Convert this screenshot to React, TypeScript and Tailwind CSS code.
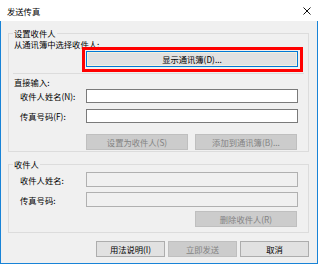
import React from 'react';

const font = "font-['Noto_Sans_CJK_SC','Microsoft_YaHei',sans-serif]";

function WinButton({
  children,
  disabled,
  className = '',
}: {
  children: React.ReactNode;
  disabled?: boolean;
  className?: string;
}) {
  return (
    <button
      type="button"
      disabled={disabled}
      className={`h-[16px] flex items-center justify-center border text-[8.3px] leading-none ${
        disabled
          ? 'bg-[#cccccc] border-[#bfbfbf] text-[#838383]'
          : 'bg-[#e1e1e1] border-[#adadad] text-black'
      } ${className}`}
    >
      {children}
    </button>
  );
}

function Field({ label, disabled, height }: { label: string; disabled?: boolean; height: string }) {
  return (
    <div className={`flex items-center ${height}`}>
      <span className="w-[72px] pl-[6px] leading-[12px]">{label}</span>
      <input
        readOnly
        disabled={disabled}
        className={`w-[212px] h-full border ${
          disabled ? 'bg-[#f0f0f0] border-[#b0b0b0]' : 'bg-white border-[#7a7a7a]'
        }`}
      />
    </div>
  );
}

function GroupBox({
  title,
  className,
  children,
}: {
  title: string;
  className: string;
  children: React.ReactNode;
}) {
  return (
    <div className={`relative w-[301px] border border-[#dcdcdc] pl-[5px] flex flex-col ${className}`}>
      <span className="absolute left-[4px] top-[-7px] px-[1px] bg-[#f0f0f0] leading-[12px]">
        {title}
      </span>
      {children}
    </div>
  );
}

export default function App() {
  return (
    <div className={`w-[318px] h-[264px] flex flex-col text-[8.3px] text-black ${font}`}>
      {/* Title bar */}
      <div className="h-[21px] bg-white flex items-center justify-between pl-[7px] pr-[7px]">
        <span className="text-[8.3px] leading-[12px] pt-[1px]">发送传真</span>
        <svg width="8" height="8" viewBox="0 0 8 8" className="mt-[1px]">
          <path d="M0.5 0.5 L7.5 7.5 M7.5 0.5 L0.5 7.5" stroke="#111" strokeWidth="1" />
        </svg>
      </div>

      {/* Body */}
      <div className="flex-1 bg-[#f0f0f0] border-x border-b border-[#1883d7] pl-[7px] flex flex-col">
        <GroupBox title="设置收件人" className="mt-[12px] h-[119px]">
          <div className="mt-[4px] h-[12px] leading-[12px]">从通讯簿中选择收件人:</div>

          <div className="relative mt-[1px] ml-[72px] w-[212px] h-[16px]">
            <button
              type="button"
              className="w-full h-full flex items-center justify-center border border-[#0078d7] bg-[#e1e1e1] shadow-[inset_0_0_0_1px_#f4f1dc] leading-none"
            >
              显示通讯簿(D)...
            </button>
            {/* annotation frame */}
            <div className="absolute -left-[4px] -top-[4px] -right-[5px] -bottom-[5px] border-[3px] border-[#ff0000] pointer-events-none" />
          </div>

          <div className="mt-[6px] ml-[-1px] w-[291px] h-[1px] bg-[#dcdcdc]" />
          <div className="mt-[2px] h-[12px] leading-[12px]">直接输入:</div>

          <div className="mt-[1px]">
            <Field label="收件人姓名(N):" height="h-[14px]" />
          </div>
          <div className="mt-[6px]">
            <Field label="传真号码(F):" height="h-[14px]" />
          </div>

          <div className="mt-[11px] ml-[72px] flex gap-[7px]">
            <WinButton disabled className="w-[102px]">
              设置为收件人(S)
            </WinButton>
            <WinButton disabled className="w-[102px]">
              添加到通讯簿(B)...
            </WinButton>
          </div>
        </GroupBox>

        <GroupBox title="收件人" className="mt-[12px] h-[69px]">
          <div className="mt-[7px]">
            <Field label="收件人姓名:" disabled height="h-[15px]" />
          </div>
          <div className="mt-[5px]">
            <Field label="传真号码:" disabled height="h-[15px]" />
          </div>
          <div className="mt-[4px] ml-[181px]">
            <WinButton disabled className="w-[102px]">
              删除收件人(R)
            </WinButton>
          </div>
        </GroupBox>

        <div className="mt-[8px] pr-[8px] flex justify-end gap-[3px]">
          <WinButton className="w-[69px]">用法说明(I)</WinButton>
          <WinButton disabled className="w-[69px]">
            立即发送
          </WinButton>
          <WinButton className="w-[69px]">取消</WinButton>
        </div>
      </div>
    </div>
  );
}
